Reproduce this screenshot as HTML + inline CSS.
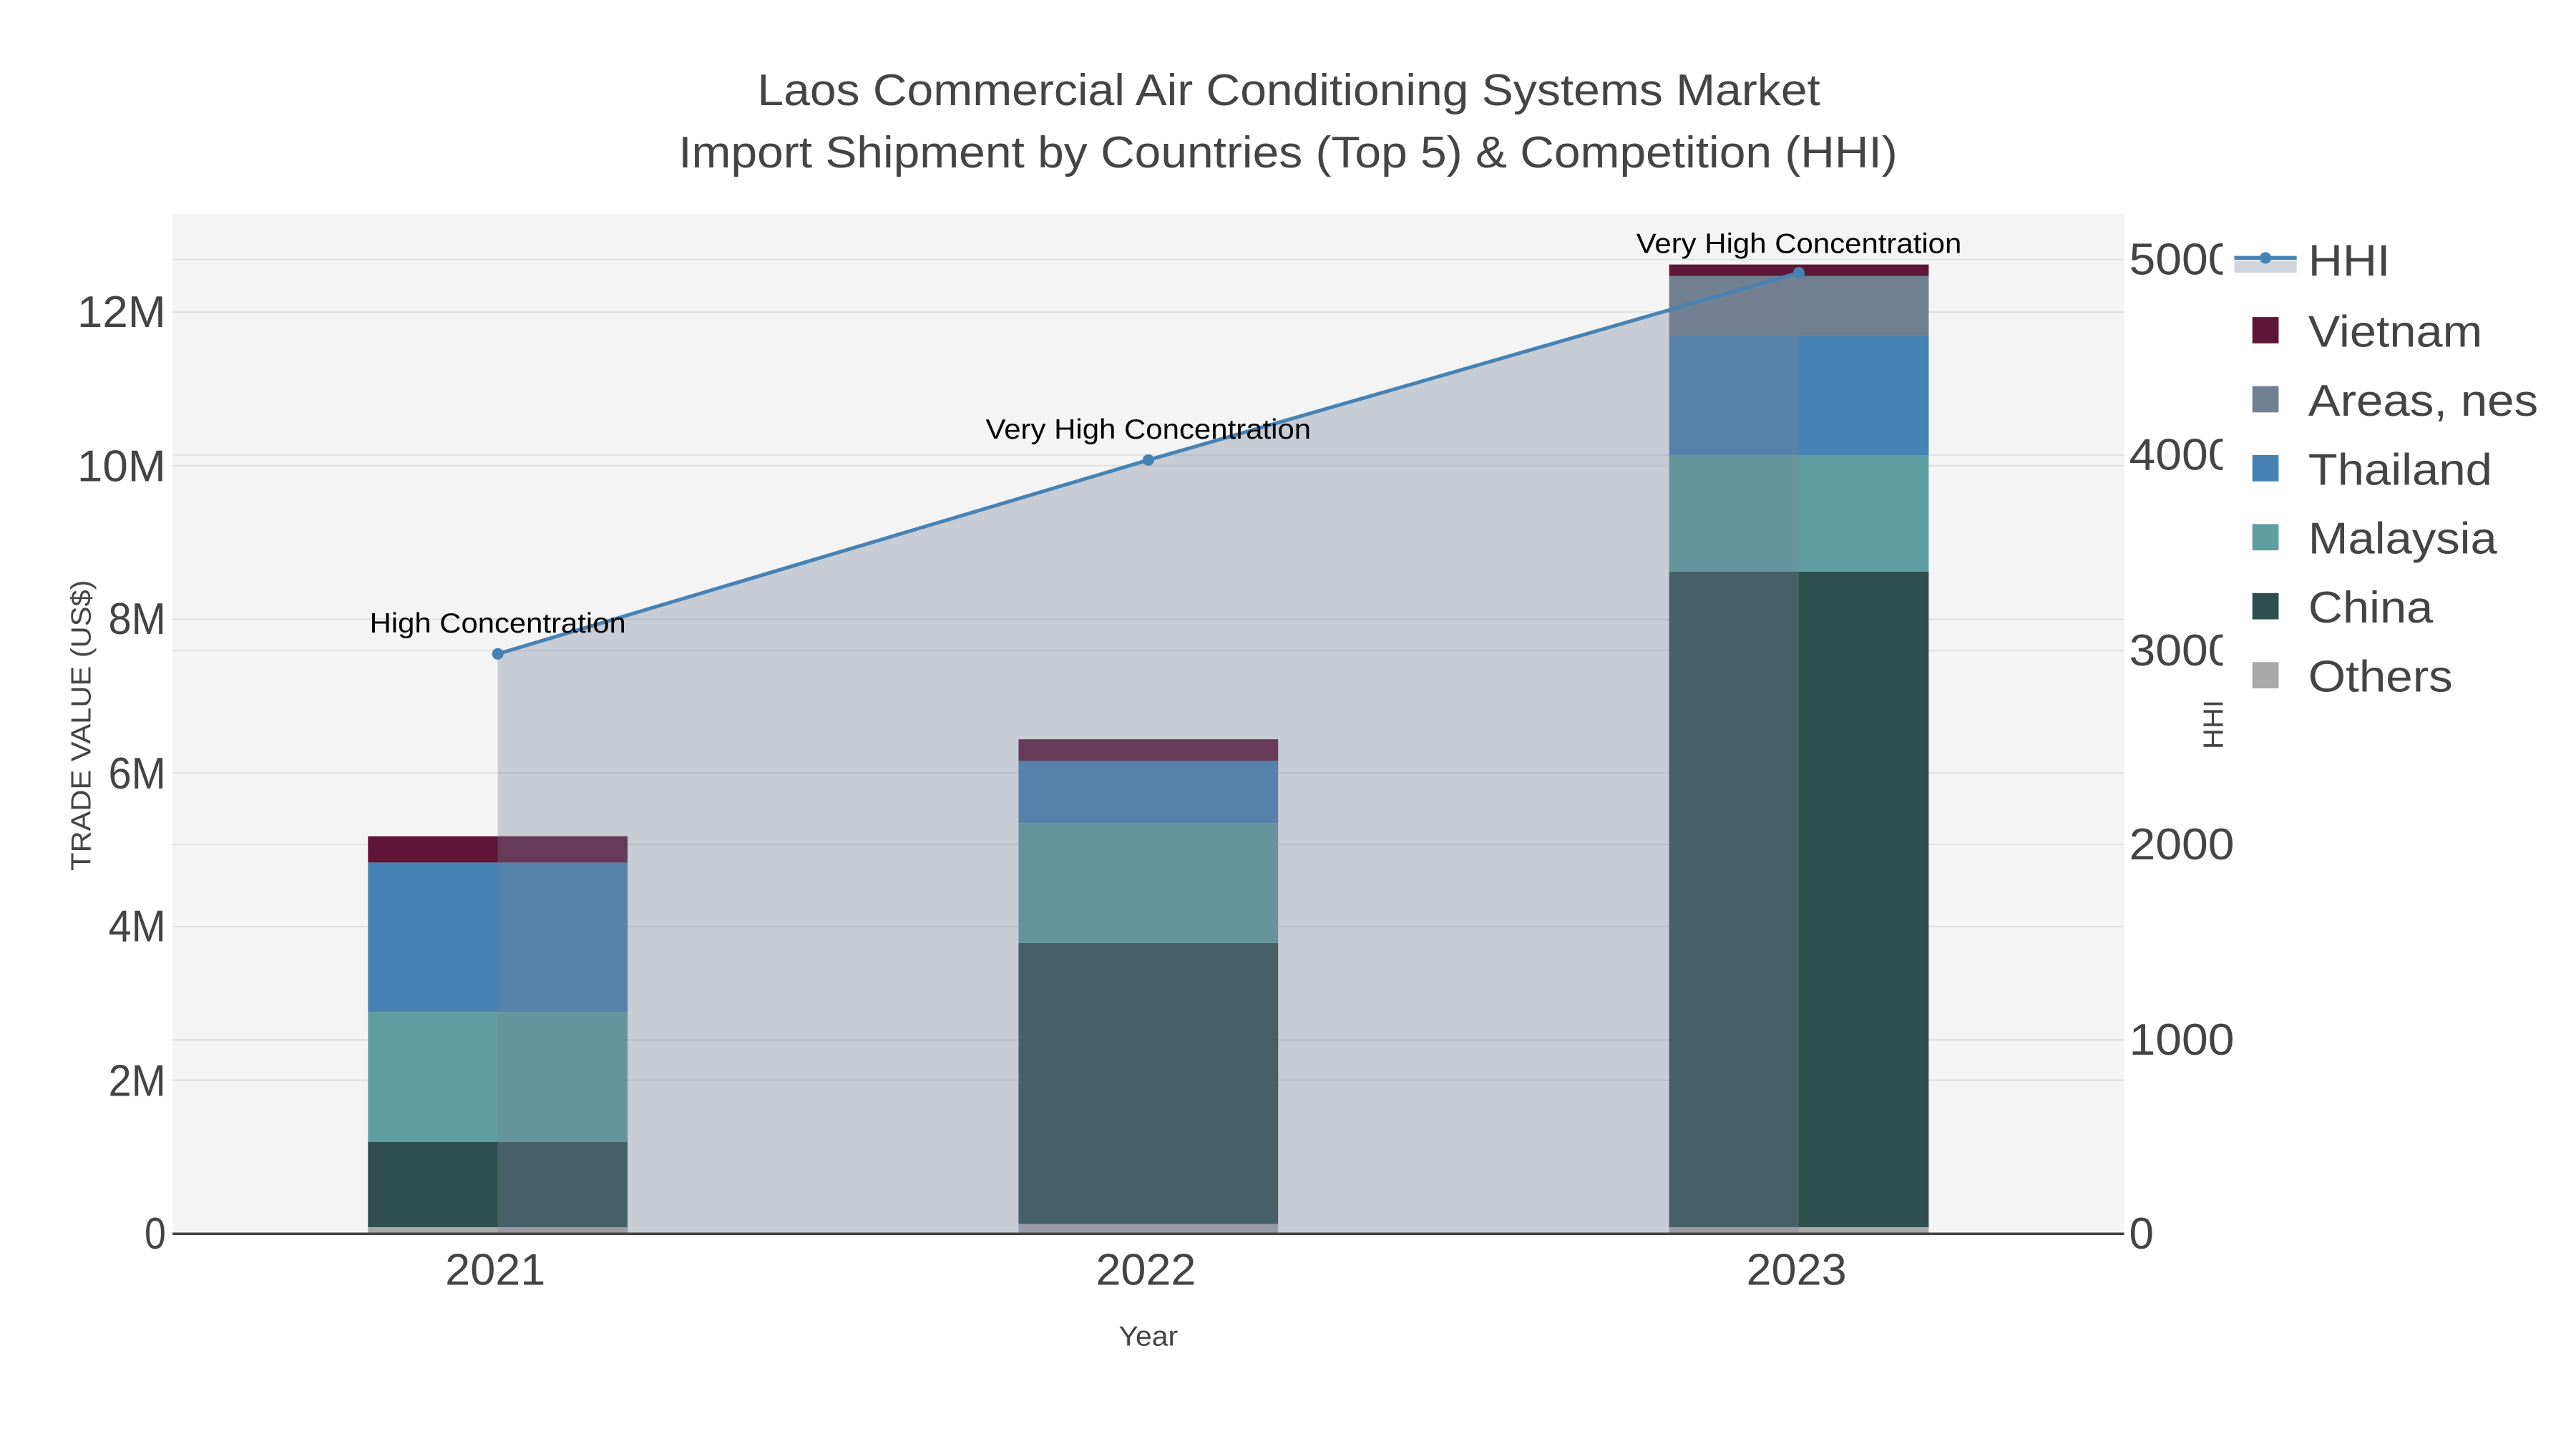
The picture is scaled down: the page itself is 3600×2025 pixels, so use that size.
<!DOCTYPE html>
<html><head><meta charset="utf-8"><style>
html,body{margin:0;padding:0;background:#fff;}
svg{display:block;}
text{font-family:"Liberation Sans",Arial,sans-serif;}
</style></head><body>
<svg width="3600" height="2025" viewBox="0 0 1568 882" xmlns="http://www.w3.org/2000/svg">
<rect x="0" y="0" width="1568" height="882" fill="#fff"/>
<rect x="105" y="130" width="1188" height="621" fill="#f4f4f4"/>
<g stroke="#e2e2e2" stroke-width="1">
<line x1="105" x2="1293" y1="657.5" y2="657.5"/>
<line x1="105" x2="1293" y1="564" y2="564"/>
<line x1="105" x2="1293" y1="470.5" y2="470.5"/>
<line x1="105" x2="1293" y1="377" y2="377"/>
<line x1="105" x2="1293" y1="283.5" y2="283.5"/>
<line x1="105" x2="1293" y1="190" y2="190"/>
<line x1="105" x2="1293" y1="633" y2="633"/>
<line x1="105" x2="1293" y1="514" y2="514"/>
<line x1="105" x2="1293" y1="396" y2="396"/>
<line x1="105" x2="1293" y1="277" y2="277"/>
<line x1="105" x2="1293" y1="158" y2="158"/>
</g>
<rect x="224" y="747" width="158" height="4" fill="#a9a9a9"/>
<rect x="224" y="695" width="158" height="52" fill="#2f4f4f"/>
<rect x="224" y="616" width="158" height="79" fill="#5f9ea0"/>
<rect x="224" y="525" width="158" height="91" fill="#4682b4"/>
<rect x="224" y="509" width="158" height="16" fill="#5f1536"/>
<rect x="620" y="745" width="158" height="6" fill="#a9a9a9"/>
<rect x="620" y="574" width="158" height="171" fill="#2f4f4f"/>
<rect x="620" y="501" width="158" height="73" fill="#5f9ea0"/>
<rect x="620" y="463" width="158" height="38" fill="#4682b4"/>
<rect x="620" y="450" width="158" height="13" fill="#5f1536"/>
<rect x="1016" y="747" width="158" height="4" fill="#a9a9a9"/>
<rect x="1016" y="348" width="158" height="399" fill="#2f4f4f"/>
<rect x="1016" y="277" width="158" height="71" fill="#5f9ea0"/>
<rect x="1016" y="204" width="158" height="73" fill="#4682b4"/>
<rect x="1016" y="168" width="158" height="36" fill="#708090"/>
<rect x="1016" y="161" width="158" height="7" fill="#5f1536"/>
<polygon points="303,398 699,280 1095,166 1095,751 303,751" fill="rgb(118,128,152)" fill-opacity="0.35"/>
<polyline points="303,398 699,280 1095,166" fill="none" stroke="#4682b4" stroke-width="2.2"/>
<circle cx="303" cy="398" r="3.5" fill="#4682b4"/>
<circle cx="699" cy="280" r="3.5" fill="#4682b4"/>
<circle cx="1095" cy="166" r="3.5" fill="#4682b4"/>
<line x1="105" x2="1293" y1="751" y2="751" stroke="#444" stroke-width="1.5"/>
<g font-size="17" fill="#000">
<text x="225" y="385" textLength="156" lengthAdjust="spacingAndGlyphs">High Concentration</text>
<text x="600" y="267" textLength="198" lengthAdjust="spacingAndGlyphs">Very High Concentration</text>
<text x="996" y="154" textLength="198" lengthAdjust="spacingAndGlyphs">Very High Concentration</text>
</g>
<g fill="#444" font-size="27">
<text x="461" y="64" textLength="647" lengthAdjust="spacingAndGlyphs">Laos Commercial Air Conditioning Systems Market</text>
<text x="413" y="102" textLength="742" lengthAdjust="spacingAndGlyphs">Import Shipment by Countries (Top 5) &amp; Competition (HHI)</text>
</g>
<g fill="#444" font-size="27">
<text x="88" y="760" textLength="13" lengthAdjust="spacingAndGlyphs">0</text>
<text x="66" y="667" textLength="35" lengthAdjust="spacingAndGlyphs">2M</text>
<text x="66" y="573" textLength="35" lengthAdjust="spacingAndGlyphs">4M</text>
<text x="66" y="480" textLength="35" lengthAdjust="spacingAndGlyphs">6M</text>
<text x="66" y="386" textLength="35" lengthAdjust="spacingAndGlyphs">8M</text>
<text x="47" y="293" textLength="54" lengthAdjust="spacingAndGlyphs">10M</text>
<text x="47" y="199" textLength="54" lengthAdjust="spacingAndGlyphs">12M</text>
</g>
<g fill="#444" font-size="27">
<text x="1296" y="760" textLength="15" lengthAdjust="spacingAndGlyphs">0</text>
<text x="1296" y="642" textLength="64" lengthAdjust="spacingAndGlyphs">1000</text>
<text x="1296" y="523" textLength="64" lengthAdjust="spacingAndGlyphs">2000</text>
<text x="1296" y="405" textLength="64" lengthAdjust="spacingAndGlyphs">3000</text>
<text x="1296" y="286" textLength="64" lengthAdjust="spacingAndGlyphs">4000</text>
<text x="1296" y="167" textLength="64" lengthAdjust="spacingAndGlyphs">5000</text>
</g>
<g fill="#444" font-size="27">
<text x="271" y="782" textLength="61" lengthAdjust="spacingAndGlyphs">2021</text>
<text x="667" y="782" textLength="61" lengthAdjust="spacingAndGlyphs">2022</text>
<text x="1063" y="782" textLength="61" lengthAdjust="spacingAndGlyphs">2023</text>
</g>
<text x="681" y="819" font-size="17" fill="#444" textLength="36" lengthAdjust="spacingAndGlyphs">Year</text>
<text transform="translate(55,530) rotate(-90)" font-size="17" fill="#444" textLength="177" lengthAdjust="spacingAndGlyphs">TRADE VALUE (US$)</text>
<text transform="translate(1353,456) rotate(-90)" font-size="17" fill="#444" textLength="30" lengthAdjust="spacingAndGlyphs">HHI</text>
<rect x="1353" y="135" width="215" height="300" fill="#fff"/>
<rect x="1360" y="159" width="38" height="7" fill="#d0d5dd"/>
<line x1="1360" x2="1398" y1="157" y2="157" stroke="#4682b4" stroke-width="2.5"/>
<circle cx="1379" cy="157" r="3.5" fill="#4682b4"/>
<rect x="1371" y="193" width="16" height="16" fill="#5f1536"/>
<rect x="1371" y="235" width="16" height="16" fill="#708090"/>
<rect x="1371" y="277" width="16" height="16" fill="#4682b4"/>
<rect x="1371" y="319" width="16" height="16" fill="#5f9ea0"/>
<rect x="1371" y="361" width="16" height="16" fill="#2f4f4f"/>
<rect x="1371" y="403" width="16" height="16" fill="#a9a9a9"/>
<g fill="#444" font-size="27">
<text x="1405" y="168" textLength="50" lengthAdjust="spacingAndGlyphs">HHI</text>
<text x="1405" y="211" textLength="106" lengthAdjust="spacingAndGlyphs">Vietnam</text>
<text x="1405" y="253" textLength="140" lengthAdjust="spacingAndGlyphs">Areas, nes</text>
<text x="1405" y="295" textLength="112" lengthAdjust="spacingAndGlyphs">Thailand</text>
<text x="1405" y="337" textLength="115" lengthAdjust="spacingAndGlyphs">Malaysia</text>
<text x="1405" y="379" textLength="76" lengthAdjust="spacingAndGlyphs">China</text>
<text x="1405" y="421" textLength="88" lengthAdjust="spacingAndGlyphs">Others</text>
</g>
</svg>
</body></html>
